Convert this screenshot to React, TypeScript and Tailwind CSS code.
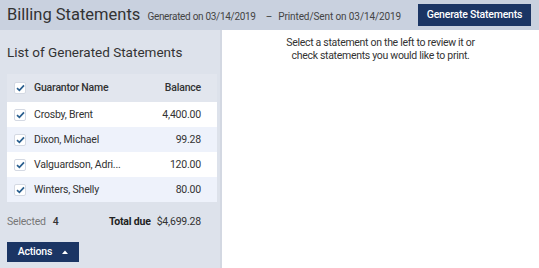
import { useState } from "react";

type Statement = {
  id: string;
  name: string;
  balance: string;
};

const STATEMENTS: Statement[] = [
  { id: "1", name: "Crosby, Brent", balance: "4,400.00" },
  { id: "2", name: "Dixon, Michael", balance: "99.28" },
  { id: "3", name: "Valguardson, Adri...", balance: "120.00" },
  { id: "4", name: "Winters, Shelly", balance: "80.00" },
];

function CheckBox({ checked, onClick }: { checked: boolean; onClick: () => void }) {
  return (
    <button
      type="button"
      onClick={onClick}
      className="flex h-[12px] w-[12px] items-center justify-center rounded-[2px] border border-[#d4d9e3] bg-white"
    >
      {checked ? (
        <svg width="9" height="8" viewBox="0 0 9 8" fill="none">
          <path d="M1 4.2 L3.4 6.4 L8 1.4" stroke="#2a5f8f" strokeWidth="1.7" />
        </svg>
      ) : null}
    </button>
  );
}

export default function App() {
  const [checkedIds, setCheckedIds] = useState<string[]>(STATEMENTS.map((s) => s.id));
  const allChecked = checkedIds.length === STATEMENTS.length;

  const toggle = (id: string) =>
    setCheckedIds((prev) => (prev.includes(id) ? prev.filter((x) => x !== id) : [...prev, id]));

  return (
    <div className="flex h-[268px] w-[539px] flex-col overflow-hidden bg-white font-['Roboto',sans-serif] text-[#333]">
      <div className="flex h-[30px] shrink-0 items-center whitespace-nowrap bg-[#c9d1df] pl-[7px] pr-[8px]">
        <h1 className="shrink-0 text-[16.5px] leading-none text-[#333]">Billing Statements</h1>
        <span className="ml-[7px] mt-[2px] shrink-0 text-[10px] tracking-[-0.3px] text-[#444]">
          Generated on 03/14/2019
        </span>
        <span className="ml-[10px] mt-[2px] shrink-0 text-[10px] text-[#444]">–</span>
        <span className="ml-[6px] mt-[2px] shrink-0 text-[10px] tracking-[-0.1px] text-[#444]">
          Printed/Sent on 03/14/2019
        </span>
        <button
          type="button"
          className="ml-auto h-[22px] w-[113px] shrink-0 bg-[#1b3564] text-[10.5px] font-medium tracking-[-0.2px] text-white"
        >
          Generate Statements
        </button>
      </div>

      <div className="flex min-h-0 flex-1">
        <div className="flex w-[222px] shrink-0 flex-col border-r-2 border-[#d3d8e2] bg-[#dde2eb] px-[7px]">
          <h2 className="mt-[13px] text-[13.5px] leading-[18px] text-[#333]">List of Generated Statements</h2>

          <div className="mt-[13px] w-[210px] text-[10.5px] tracking-[-0.2px]">
            <div className="flex h-[28px] items-center bg-[#e2e6ee] pl-[7px] pr-[16px] font-medium text-[#333]">
              <CheckBox
                checked={allChecked}
                onClick={() => setCheckedIds(allChecked ? [] : STATEMENTS.map((s) => s.id))}
              />
              <span className="ml-[8px]">Guarantor Name</span>
              <span className="ml-auto">Balance</span>
            </div>
            {STATEMENTS.map((statement, index) => (
              <div
                key={statement.id}
                className={`flex h-[25px] items-center pl-[7px] pr-[16px] ${
                  index % 2 === 0 ? "bg-white" : "bg-[#eef2fb]"
                }`}
              >
                <CheckBox
                  checked={checkedIds.includes(statement.id)}
                  onClick={() => toggle(statement.id)}
                />
                <span className="ml-[8px]">{statement.name}</span>
                <span className="ml-auto">{statement.balance}</span>
              </div>
            ))}
          </div>

          <div className="mt-[12px] flex items-center pr-[12px] text-[10.5px] tracking-[-0.2px]">
            <span className="text-[#777]">Selected</span>
            <span className="ml-[7px] font-medium text-[#333]">{checkedIds.length}</span>
            <span className="ml-auto font-bold text-[#222]">Total due</span>
            <span className="ml-[6px] text-[#333]">$4,699.28</span>
          </div>

          <button
            type="button"
            className="mt-[12px] flex h-[20px] w-[72px] items-center justify-center gap-[10px] bg-[#1b3564] text-[10.5px] font-medium tracking-[-0.2px] text-white"
          >
            Actions
            <svg width="6" height="4" viewBox="0 0 6 4">
              <path d="M0 4 L3 0.5 L6 4 Z" fill="white" />
            </svg>
          </button>
        </div>

        <div className="flex-1 bg-white pt-[6px] text-center text-[10.5px] leading-[13px] tracking-[-0.3px] text-[#333]">
          <p>Select a statement on the left to review it or</p>
          <p>check statements you would like to print.</p>
        </div>
      </div>
    </div>
  );
}
